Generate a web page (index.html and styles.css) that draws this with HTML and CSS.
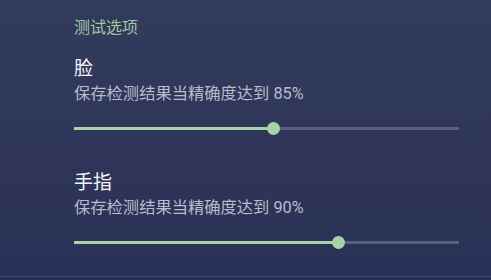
FILE: index.html
```html
<!DOCTYPE html>
<html lang="zh">
<head>
    <meta charset="UTF-8">
    <title>测试选项</title>
    <link rel="stylesheet" href="styles.css">
</head>
<body>
    <div class="panel">
        <div class="section-title">测试选项</div>

        <div class="option">
            <div class="option-name">脸</div>
            <div class="option-desc">保存检测结果当精确度达到 85%</div>
            <div class="slider">
                <div class="slider-fill" style="width: 51.7%"></div>
                <div class="slider-thumb" style="left: 51.7%"></div>
            </div>
        </div>

        <div class="option">
            <div class="option-name">手指</div>
            <div class="option-desc">保存检测结果当精确度达到 90%</div>
            <div class="slider">
                <div class="slider-fill" style="width: 68.8%"></div>
                <div class="slider-thumb" style="left: 68.8%"></div>
            </div>
        </div>
    </div>
</body>
</html>
```

FILE: styles.css
```css
html, body {
    margin: 0;
    padding: 0;
    height: 100%;
}

body {
    font-family: Roboto, 'Noto Sans CJK SC', sans-serif;
    background: linear-gradient(#333b5d, #2a3156);
    color: #fff;
    overflow: hidden;
}

.panel {
    height: 277px;
    padding: 0 32px 0 74px;
    box-sizing: border-box;
    border-bottom: 1px solid #434a6c;
}

.section-title {
    padding-top: 16px;
    font-size: 16px;
    line-height: 24px;
    color: #9ec79f;
}

.option {
    padding-top: 15px;
}

.option + .option {
    padding-top: 39px;
}

.option-name {
    font-size: 19px;
    line-height: 28px;
    color: #f4f5f8;
}

.option-desc {
    font-size: 16.3px;
    line-height: 22px;
    color: #b9bccb;
}

.slider {
    position: relative;
    margin-top: 22px;
    height: 3px;
    background: #595f7e;
}

.slider-fill {
    height: 100%;
    background: #a8d3a9;
}

.slider-thumb {
    position: absolute;
    top: -5px;
    width: 13px;
    height: 13px;
    margin-left: -6.5px;
    border-radius: 50%;
    background: #a8d3a9;
}
```
